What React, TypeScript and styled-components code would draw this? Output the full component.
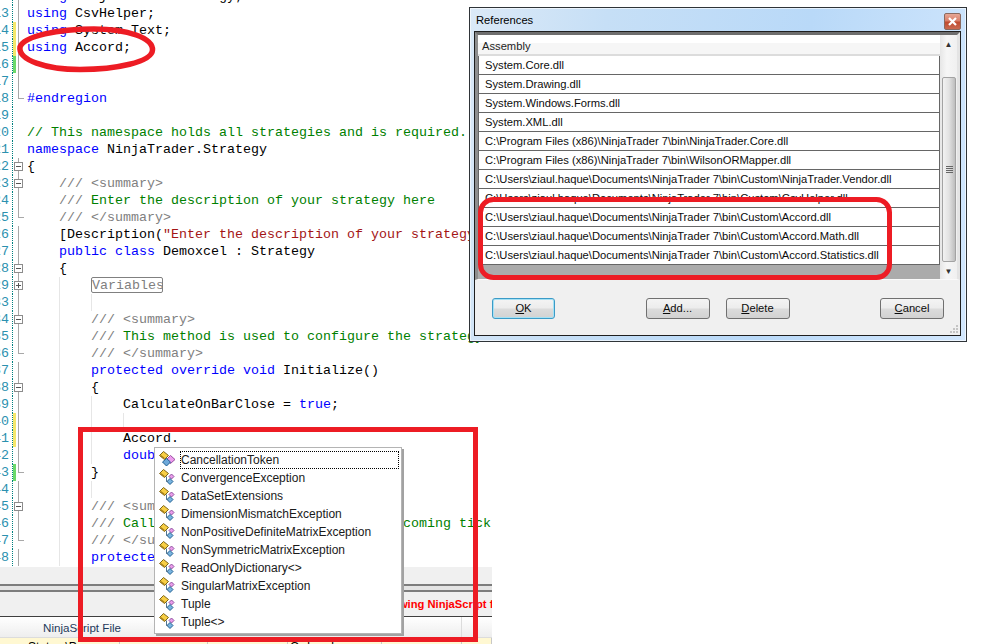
import React from 'react';
import styled, { createGlobalStyle, css } from 'styled-components';

const GlobalStyle = createGlobalStyle`
  html, body {
    margin: 0;
    height: 100%;
    overflow: hidden;
    background: #ffffff;
  }
  #root {
    height: 644px;
  }
`;

const uiFont = `"Liberation Sans", Arial, sans-serif`;

const Page = styled.div`
  position: relative;
  width: 987px;
  height: 644px;
  overflow: hidden;
  background: #ffffff;
`;

const LeftColumn = styled.div`
  width: 492px;
  height: 644px;
  display: flex;
  flex-direction: column;
  overflow: hidden;
`;

const Editor = styled.div`
  height: 567px;
  flex: none;
  overflow: hidden;
`;

const CodeLines = styled.div`
  margin-top: -12px;
`;

const Row = styled.div`
  display: flex;
  height: 17px;
  font: 13.33px/17px "Liberation Mono", "Courier New", monospace;
  white-space: pre;
`;

const Gutter = styled.div`
  width: 9px;
  flex: none;
  display: flex;
  justify-content: flex-end;
  overflow: hidden;
  padding-right: 3px;
  color: #2b91af;
  border-right: 1px dotted #008080;
`;

type FoldKind = 'none' | 'line' | 'box' | 'plus' | 'end';

const changeColors: Record<string, string> = {
  yellow: '#f4e76a',
  green: '#6bd96b',
};

const Margin = styled.div<{ $fold: FoldKind; $change?: string }>`
  width: 14px;
  flex: none;
  display: flex;
  align-items: center;
  padding-left: 1px;
  box-sizing: border-box;
  background-repeat: no-repeat;
  ${(p) => {
    const layers: string[] = [];
    if (p.$fold === 'line' || p.$fold === 'box' || p.$fold === 'plus') {
      layers.push(`linear-gradient(#a8a8a8, #a8a8a8) 5px 0 / 1px 100%`);
    }
    if (p.$fold === 'end') {
      layers.push(`linear-gradient(#a8a8a8, #a8a8a8) 5px 0 / 1px 9px`);
      layers.push(`linear-gradient(#a8a8a8, #a8a8a8) 5px 8px / 6px 1px`);
    }
    if (p.$change) {
      const c = changeColors[p.$change];
      layers.push(`linear-gradient(${c}, ${c}) 0 0 / 3px 100%`);
    }
    return layers.length
      ? css`
          background: ${layers.join(', ')};
          background-repeat: no-repeat;
        `
      : '';
  }}
`;

const FoldBox = styled.div<{ $open?: boolean }>`
  width: 9px;
  height: 9px;
  box-sizing: border-box;
  border: 1px solid #8c8c8c;
  background:
    linear-gradient(#555, #555) center / 5px 1px no-repeat,
    ${(p) => (p.$open ? 'linear-gradient(#555, #555) center / 1px 5px no-repeat,' : '')} #ffffff;
`;

const Code = styled.div`
  flex: 1;
  display: flex;
  min-width: 0;
`;

const Indent = styled.span<{ $guide: boolean }>`
  flex: none;
  width: 32px;
  height: 17px;
  box-sizing: border-box;
  ${(p) => p.$guide && 'border-left: 1px solid #e6e6e6;'}
`;

const tokenColors: Record<string, string> = {
  t: '#000000',
  k: '#0000ff',
  c: '#008000',
  d: '#808080',
  s: '#a31515',
};

const Token = styled.span<{ $kind: string }>`
  color: ${(p) => tokenColors[p.$kind]};
`;

const Collapsed = styled.span`
  width: 72px;
  box-sizing: border-box;
  color: #808080;
  border: 1px solid #808080;
  border-radius: 2px;
  height: 16px;
  line-height: 15px;
  overflow: hidden;
`;

type Part = [string, string];
type LineDef = {
  n: number;
  fold?: FoldKind;
  change?: string;
  indent?: number;
  guides?: number[];
  parts?: Part[];
  collapsed?: string;
};

const lines: LineDef[] = [
  { n: 12, fold: 'line', parts: [['k', 'using'], ['t', ' NinjaTrader.Strategy;']] },
  { n: 13, fold: 'line', parts: [['k', 'using'], ['t', ' CsvHelper;']] },
  { n: 14, fold: 'line', change: 'yellow', parts: [['k', 'using'], ['t', ' System.Text;']] },
  { n: 15, fold: 'line', change: 'yellow', parts: [['k', 'using'], ['t', ' Accord;']] },
  { n: 16, fold: 'line', change: 'green' },
  { n: 17, fold: 'line' },
  { n: 18, fold: 'end', parts: [['k', '#endregion']] },
  { n: 19 },
  { n: 20, parts: [['c', '// This namespace holds all strategies and is required. Do not change it.']] },
  { n: 21, parts: [['k', 'namespace'], ['t', ' NinjaTrader.Strategy']] },
  { n: 22, fold: 'box', parts: [['t', '{']] },
  { n: 23, fold: 'box', indent: 1, parts: [['d', '/// <summary>']] },
  { n: 24, fold: 'line', indent: 1, parts: [['d', '/// '], ['c', 'Enter the description of your strategy here']] },
  { n: 25, fold: 'end', indent: 1, parts: [['d', '/// </summary>']] },
  { n: 26, fold: 'line', indent: 1, parts: [['t', '[Description('], ['s', '"Enter the description of your strategy here"'], ['t', ')]']] },
  { n: 27, fold: 'line', indent: 1, parts: [['k', 'public'], ['t', ' '], ['k', 'class'], ['t', ' Demoxcel : Strategy']] },
  { n: 28, fold: 'box', indent: 1, parts: [['t', '{']] },
  { n: 29, fold: 'plus', indent: 2, guides: [1], collapsed: 'Variables' },
  { n: 33, fold: 'line', indent: 3, guides: [1, 2] },
  { n: 34, fold: 'box', indent: 2, guides: [1], parts: [['d', '/// <summary>']] },
  { n: 35, fold: 'line', indent: 2, guides: [1], parts: [['d', '/// '], ['c', 'This method is used to configure the strategy']] },
  { n: 36, fold: 'end', indent: 2, guides: [1], parts: [['d', '/// </summary>']] },
  { n: 37, fold: 'line', indent: 2, guides: [1], parts: [['k', 'protected'], ['t', ' '], ['k', 'override'], ['t', ' '], ['k', 'void'], ['t', ' Initialize()']] },
  { n: 38, fold: 'box', indent: 2, guides: [1], parts: [['t', '{']] },
  { n: 39, fold: 'line', indent: 3, guides: [1, 2], parts: [['t', 'CalculateOnBarClose = '], ['k', 'true'], ['t', ';']] },
  { n: 40, fold: 'line', change: 'yellow', indent: 4, guides: [1, 2, 3] },
  { n: 41, fold: 'line', change: 'yellow', indent: 3, guides: [1, 2], parts: [['t', 'Accord.']] },
  { n: 42, fold: 'line', indent: 3, guides: [1, 2], parts: [['k', 'double']] },
  { n: 43, fold: 'end', change: 'green', indent: 2, guides: [1], parts: [['t', '}']] },
  { n: 44, fold: 'line', indent: 3, guides: [1, 2] },
  { n: 45, fold: 'box', indent: 2, guides: [1], parts: [['d', '/// <summary>']] },
  { n: 46, fold: 'line', indent: 2, guides: [1], parts: [['d', '/// '], ['c', 'Called on each bar update event (incoming tick)']] },
  { n: 47, fold: 'end', indent: 2, guides: [1], parts: [['d', '/// </summary>']] },
  { n: 48, fold: 'line', indent: 2, guides: [1], parts: [['k', 'protected'], ['t', ' '], ['k', 'override'], ['t', ' '], ['k', 'void'], ['t', ' OnBarUpdate()']] },
];

const Strip = styled.div`
  height: 17px;
  flex: none;
  background: #f0f0f0;
`;

const Splitter = styled.div`
  height: 8px;
  flex: none;
  box-sizing: border-box;
  border-top: 2px solid #7d7d7d;
  border-bottom: 2px solid #7d7d7d;
  background: #e4e4e4;
`;

const MessageBar = styled.div`
  height: 24px;
  flex: none;
  box-sizing: border-box;
  background: #f0f0f0;
  padding-left: 269px;
  font: bold 11.2px/24px ${uiFont};
  color: #ff0000;
  white-space: nowrap;
  overflow: hidden;
`;

const GridHeader = styled.div`
  height: 22px;
  flex: none;
  box-sizing: border-box;
  display: grid;
  grid-template-columns: 121px 341px 1fr;
  border-top: 1px solid #3f3f3f;
  border-bottom: 1px solid #dcdcdc;
  background: linear-gradient(#ffffff 0%, #f8f8f8 40%, #eeeeee 100%);
`;

const HeaderCell = styled.div`
  font: 11.6px/21px ${uiFont};
  color: #1e395b;
  text-align: right;
  box-sizing: border-box;
  white-space: nowrap;
  &:nth-child(2) {
    border-right: 1px solid #dcdcdc;
  }
`;

const GridRow = styled.div`
  flex: 1;
  display: grid;
  grid-template-columns: 120px 88px 80px 94px 80px 30px;
  background: #fff8d2;
  overflow: hidden;
`;

const GridCell = styled.div<{ $inset?: number }>`
  font: 12px/14px ${uiFont};
  color: #000000;
  border-right: 1px solid #c8c8c8;
  box-sizing: border-box;
  padding: 2px 0 0 ${(p) => p.$inset ?? 2}px;
  white-space: nowrap;
  overflow: hidden;
`;

/* completion popup */
const Popup = styled.div`
  position: absolute;
  left: 154px;
  top: 447px;
  width: 248px;
  height: 187px;
  box-sizing: border-box;
  padding-top: 3px;
  background: #ffffff;
  border: 1px solid #b4b4b4;
  box-shadow: 2px 2px 0 #a2a2a2;
`;

const PopupRow = styled.div`
  display: flex;
  align-items: center;
  height: 18px;
  padding-left: 4px;
`;

const PopupLabel = styled.span<{ $selected?: boolean }>`
  flex: 1;
  margin-left: 5px;
  margin-right: 2px;
  font: 12px/16px ${uiFont};
  color: #1a1a1a;
  border: 1px dotted ${(p) => (p.$selected ? '#000000' : 'transparent')};
  white-space: nowrap;
`;

const MemberIcon = ({ big }: { big?: boolean }) => (
  <svg width="16" height="16" viewBox="0 0 16 16" style={{ flex: 'none', marginTop: -3 }}>
    <path d="M0.5 4.5 L4.5 0.5 L9.5 4.5 L5.5 8.5 Z" fill="#f8cf45" stroke="#7d6518" strokeWidth="1" />
    <path d="M1 5 L5.5 8.5 L5.5 6.8 L2 4 Z" fill="#a67f18" />
    {big ? (
      <>
        <path d="M7 9 L11.5 4.5 L16 8.5 L11.5 12.5 Z" fill="#ee9cee" stroke="#9a4fa0" strokeWidth="1" />
        <path d="M3.5 11 L7.5 7.5 L11.5 11 L7.5 15 Z" fill="#6ea9da" stroke="#1f5f92" strokeWidth="1" />
      </>
    ) : (
      <>
        <path d="M10 7.5 L12.5 5 L15 7.5 L12.5 10 Z" fill="#ea9cea" stroke="#8e52a0" strokeWidth="1" />
        <path d="M8 12.5 L11 9.5 L14 12.5 L11 15.5 Z" fill="#79b4e0" stroke="#1f5f92" strokeWidth="1" />
        <path d="M7.5 7.5 L7.5 12.5 L9 12.5" fill="none" stroke="#4f7490" strokeWidth="1" />
      </>
    )}
  </svg>
);

const completions = [
  'CancellationToken',
  'ConvergenceException',
  'DataSetExtensions',
  'DimensionMismatchException',
  'NonPositiveDefiniteMatrixException',
  'NonSymmetricMatrixException',
  'ReadOnlyDictionary<>',
  'SingularMatrixException',
  'Tuple',
  'Tuple<>',
];

/* references dialog */
const Dialog = styled.div`
  position: absolute;
  left: 469px;
  top: 7px;
  width: 498px;
  height: 335px;
  box-sizing: border-box;
  display: flex;
  flex-direction: column;
  padding: 0 5px 5px 4px;
  border: 1px solid #2f3438;
  background: linear-gradient(100deg, #dbe9f7 0%, #c6dff6 25%, #b9d9f8 62%, #d2e7fd 100%);
  box-shadow: inset 0 0 0 1px rgba(255, 255, 255, 0.6);
`;

const TitleBar = styled.div`
  height: 23px;
  flex: none;
  display: flex;
  align-items: center;
  justify-content: space-between;
  font: 11.2px ${uiFont};
  color: #000000;
  padding-left: 2px;
  padding-top: 1px;
  box-sizing: border-box;
`;

const CloseButton = styled.div`
  width: 17px;
  height: 17px;
  margin-top: 3px;
  box-sizing: border-box;
  display: flex;
  align-items: center;
  justify-content: center;
  border: 1px solid #8a6a60;
  border-radius: 2px;
  background: linear-gradient(#e6a795 0%, #d97e68 48%, #c04a2e 52%, #c96a50 100%);
`;

const DialogBody = styled.div`
  flex: 1;
  display: flex;
  flex-direction: column;
  border: 1px solid #1f1f1f;
  background: #f0f0f0;
  position: relative;
`;

const ListBox = styled.div`
  height: 248px;
  flex: none;
  box-sizing: border-box;
  display: flex;
  border-top: 3px solid #6e6e6e;
  border-left: 3px solid #8e8e8e;
  border-right: 3px solid #e4e4e4;
  border-bottom: 1px solid #fafafa;
  background: #ffffff;
`;

const ListTable = styled.div`
  width: 462px;
  flex: none;
  display: flex;
  flex-direction: column;
  background: #ababab;
`;

const ListHeader = styled.div`
  height: 21px;
  flex: none;
  box-sizing: border-box;
  padding-left: 4px;
  font: 11.2px/22px ${uiFont};
  color: #1e1e1e;
  border-bottom: 2px solid #dcdcdc;
  background: linear-gradient(#ffffff 0 8px, #f6f6f6 8px);
`;

const ListRow = styled.div`
  height: 19px;
  flex: none;
  box-sizing: border-box;
  padding-left: 6px;
  font: 11.2px/18px ${uiFont};
  color: #0c0c0c;
  background: #ffffff;
  border-left: 1px solid #666666;
  border-right: 1px solid #666666;
  border-bottom: 1px solid #666666;
  white-space: nowrap;
  overflow: hidden;
`;

const Scrollbar = styled.div`
  flex: 1;
  display: flex;
  flex-direction: column;
  background: linear-gradient(90deg, #e6e6e6, #f6f6f6 40%, #f0f0f0);
`;

const ScrollArrow = styled.div<{ $bottom?: boolean }>`
  height: 20px;
  flex: none;
  display: flex;
  align-items: center;
  justify-content: center;
  font: 8px/1 ${uiFont};
  color: #333333;
  ${(p) => p.$bottom && 'margin-top: auto;'}
`;

const ScrollThumb = styled.div`
  height: 185px;
  flex: none;
  margin: 22px 1px 0 2px;
  box-sizing: border-box;
  display: flex;
  flex-direction: column;
  align-items: center;
  justify-content: center;
  gap: 1px;
  border: 1px solid #a3a3a3;
  border-radius: 2px;
  background: linear-gradient(90deg, #f2f2f2, #e2e2e2 50%, #bdbdbd);
`;

const GripLine = styled.div`
  width: 7px;
  height: 1px;
  background: #666666;
`;

const ButtonBar = styled.div`
  flex: 1;
  display: flex;
  justify-content: space-between;
  align-items: flex-start;
  padding: 18px 16px 0 17px;
`;

const ButtonGroup = styled.div`
  display: flex;
  gap: 16px;
`;

const DialogButton = styled.div<{ $focused?: boolean; $wide?: boolean }>`
  width: ${(p) => (p.$wide ? 64 : 63)}px;
  height: 21px;
  box-sizing: border-box;
  text-align: center;
  font: 11.2px/19px ${uiFont};
  color: #0c0c0c;
  border-radius: 3px;
  border: 1px solid ${(p) => (p.$focused ? '#3b9bc7' : '#707070')};
  background: linear-gradient(#f4f4f4 0%, #ececec 48%, #dcdcdc 52%, #d2d2d2 100%);
  ${(p) => p.$focused && 'box-shadow: inset 0 0 0 1px #a6e1f4;'}
  u {
    text-underline-offset: 1px;
  }
`;

const Grip = styled.svg`
  position: absolute;
  right: 1px;
  bottom: 1px;
`;

const Annotations = styled.svg`
  position: absolute;
  left: 0;
  top: 0;
  pointer-events: none;
`;

const references = [
  'System.Core.dll',
  'System.Drawing.dll',
  'System.Windows.Forms.dll',
  'System.XML.dll',
  'C:\\Program Files (x86)\\NinjaTrader 7\\bin\\NinjaTrader.Core.dll',
  'C:\\Program Files (x86)\\NinjaTrader 7\\bin\\WilsonORMapper.dll',
  'C:\\Users\\ziaul.haque\\Documents\\NinjaTrader 7\\bin\\Custom\\NinjaTrader.Vendor.dll',
  'C:\\Users\\ziaul.haque\\Documents\\NinjaTrader 7\\bin\\Custom\\CsvHelper.dll',
  'C:\\Users\\ziaul.haque\\Documents\\NinjaTrader 7\\bin\\Custom\\Accord.dll',
  'C:\\Users\\ziaul.haque\\Documents\\NinjaTrader 7\\bin\\Custom\\Accord.Math.dll',
  'C:\\Users\\ziaul.haque\\Documents\\NinjaTrader 7\\bin\\Custom\\Accord.Statistics.dll',
];

const CodeRow = ({ line }: { line: LineDef }) => {
  const fold = line.fold ?? 'none';
  const guides = line.guides ?? [];
  return (
    <Row>
      <Gutter>{line.n}</Gutter>
      <Margin $fold={fold} $change={line.change}>
        {fold === 'box' && <FoldBox />}
        {fold === 'plus' && <FoldBox $open />}
      </Margin>
      <Code>
        {Array.from({ length: line.indent ?? 0 }).map((_, i) => (
          <Indent key={i} $guide={guides.includes(i)} />
        ))}
        {line.collapsed && <Collapsed>{line.collapsed}</Collapsed>}
        {(line.parts ?? []).map(([kind, text], i) => (
          <Token key={i} $kind={kind}>
            {text}
          </Token>
        ))}
      </Code>
    </Row>
  );
};

export default function App() {
  return (
    <Page>
      <GlobalStyle />
      <LeftColumn>
        <Editor>
          <CodeLines>
            {lines.map((line) => (
              <CodeRow key={line.n} line={line} />
            ))}
          </CodeLines>
        </Editor>
        <Strip />
        <Splitter />
        <MessageBar>Error compiling the following NinjaScript file</MessageBar>
        <GridHeader>
          <HeaderCell>NinjaScript File</HeaderCell>
          <HeaderCell />
          <HeaderCell />
        </GridHeader>
        <GridRow>
          <GridCell $inset={28}>Status \Program</GridCell>
          <GridCell />
          <GridCell />
          <GridCell>Ordered</GridCell>
          <GridCell />
          <GridCell />
        </GridRow>
      </LeftColumn>

      <Popup>
        {completions.map((name, i) => (
          <PopupRow key={name}>
            <MemberIcon big={i === 0} />
            <PopupLabel $selected={i === 0}>{name}</PopupLabel>
          </PopupRow>
        ))}
      </Popup>

      <Dialog>
        <TitleBar>
          References
          <CloseButton>
            <svg width="9" height="9" viewBox="0 0 9 9">
              <path d="M1 1 L8 8 M8 1 L1 8" stroke="#ffffff" strokeWidth="2.2" />
            </svg>
          </CloseButton>
        </TitleBar>
        <DialogBody>
          <ListBox>
            <ListTable>
              <ListHeader>Assembly</ListHeader>
              {references.map((path) => (
                <ListRow key={path}>{path}</ListRow>
              ))}
            </ListTable>
            <Scrollbar>
              <ScrollArrow>▲</ScrollArrow>
              <ScrollThumb>
                <GripLine />
                <GripLine />
                <GripLine />
                <GripLine />
              </ScrollThumb>
              <ScrollArrow $bottom>▼</ScrollArrow>
            </Scrollbar>
          </ListBox>
          <ButtonBar>
            <DialogButton $focused>
              <u>O</u>K
            </DialogButton>
            <ButtonGroup>
              <DialogButton $wide>
                <u>A</u>dd...
              </DialogButton>
              <DialogButton $wide>
                <u>D</u>elete
              </DialogButton>
            </ButtonGroup>
            <DialogButton $wide>
              <u>C</u>ancel
            </DialogButton>
          </ButtonBar>
          <Grip width="10" height="10" viewBox="0 0 10 10">
            <path d="M7 1h2v2h-2z M4 4h2v2h-2z M7 4h2v2h-2z M1 7h2v2h-2z M4 7h2v2h-2z M7 7h2v2h-2z" fill="#c4c4c4" />
          </Grip>
        </DialogBody>
      </Dialog>

      <Annotations width="987" height="644" viewBox="0 0 987 644">
        <path
          d="M20 47 C24 36 58 29 94 29 C128 29 153 38 152.5 50 C152 62 116 69.5 80 69.5 C46 69.5 18 60 20 47 Z"
          fill="none"
          stroke="#ed1c24"
          strokeWidth="5.5"
        />
        <rect x="480.5" y="199.5" width="409" height="78" rx="13" fill="none" stroke="#ed1c24" strokeWidth="5" />
        <rect x="80.5" y="429.5" width="395" height="210" fill="none" stroke="#ed1c24" strokeWidth="5" />
      </Annotations>
    </Page>
  );
}
